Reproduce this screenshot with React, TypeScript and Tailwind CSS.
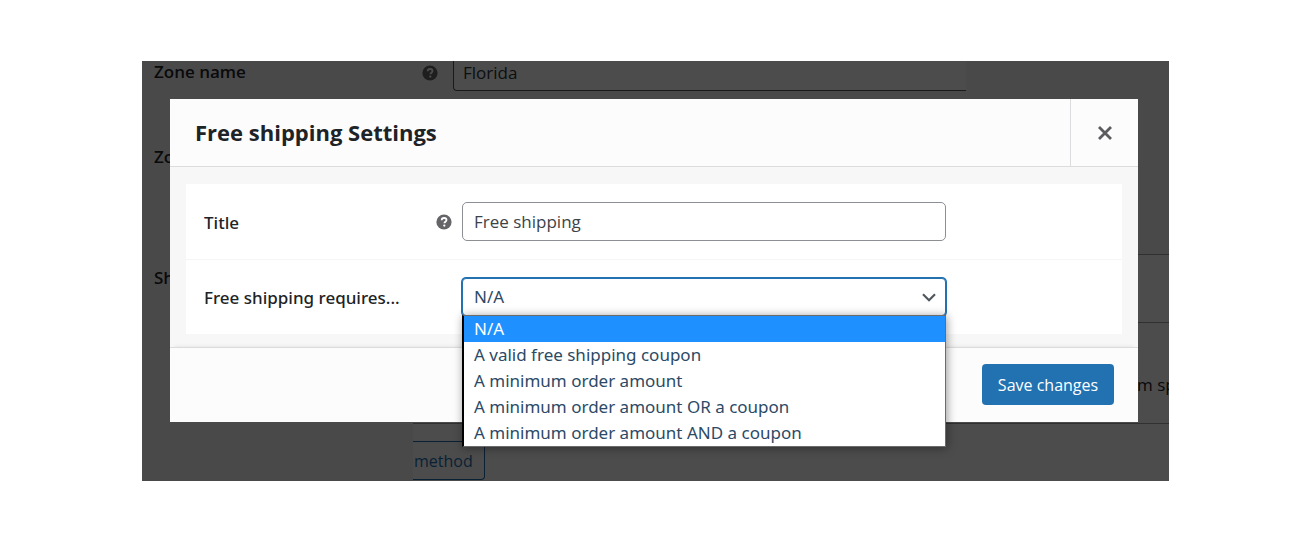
import { useState } from "react";

const REQUIREMENTS = [
  "N/A",
  "A valid free shipping coupon",
  "A minimum order amount",
  "A minimum order amount OR a coupon",
  "A minimum order amount AND a coupon",
];

function HelpTip() {
  return (
    <svg viewBox="0 0 16 16" className="size-4 shrink-0" aria-hidden="true">
      <circle cx="8" cy="8" r="7.6" fill="#646469" />
      <path
        d="M5.7 6.3C5.7 4.9 6.7 4 8.1 4s2.4.8 2.4 2.1c0 1.7-2.1 1.7-2.1 3.2"
        fill="none"
        stroke="#fff"
        strokeWidth="1.8"
      />
      <circle cx="8.3" cy="11.6" r="1.15" fill="#fff" />
    </svg>
  );
}

// Zone settings screen behind the modal
function ZonePage() {
  return (
    <div className="col-start-1 row-start-1 flex flex-col overflow-hidden bg-[#f5f5f7] text-[17px] text-[#1d2327]">
      <div className="flex h-[30px] items-start pl-3">
        <label htmlFor="zone-name" className="w-[268px] leading-[22px] font-semibold">
          Zone name
        </label>
        <div className="flex h-6 w-[31px] items-center">
          <HelpTip />
        </div>
        <input
          id="zone-name"
          className="h-[30px] w-[513px] rounded-bl border-b border-l border-[#50575e] bg-white px-[9px] pb-[6px] text-[#2c3338] outline-none"
          defaultValue="Florida"
        />
      </div>

      <div className="flex h-[163px] items-center pb-8 pl-3 font-semibold">Zo</div>

      <div className="flex grow">
        <div className="w-[271px] shrink-0 pt-3 pl-3 leading-6 font-semibold">Sh</div>
        <div className="flex grow flex-col border-t border-[#a0a0a0] bg-white">
          <div className="h-[67px]" />
          <div className="flex h-[101px] items-center justify-end overflow-hidden border-t border-[#a0a0a0] pt-6">
            <span className="w-8 whitespace-nowrap">m sp</span>
          </div>
          <div className="border-t border-[#a0a0a0] pt-[17px] pb-px">
            <button className="h-[39px] w-[72px] rounded-r border border-l-0 border-[#2271b1] pl-px text-left text-base text-[#2271b1]">
              method
            </button>
          </div>
        </div>
      </div>
    </div>
  );
}

export default function App() {
  const [title, setTitle] = useState("Free shipping");
  const [requires, setRequires] = useState(REQUIREMENTS[0]);
  const [open, setOpen] = useState(true);

  return (
    <main className="min-h-screen bg-white pt-[61px] pr-[131px] pl-[142px] font-['Open_Sans','Noto_Sans',sans-serif]">
      <div className="grid">
        <ZonePage />

        <div className="z-10 col-start-1 row-start-1 bg-black/70 pt-[38px] pr-[31px] pb-[59px] pl-7">
          <section role="dialog" aria-label="Free shipping Settings" className="bg-[#fcfcfc]">
            <header className="flex h-[68px] items-stretch border-b border-[#dcdcde]">
              <h1 className="flex grow items-center pl-[25px] text-[22px] font-bold text-[#1d2327]">
                Free shipping Settings
              </h1>
              <button
                aria-label="Close"
                className="flex w-[68px] items-center justify-center border-l border-[#dcdcde]"
              >
                <svg viewBox="0 0 14 14" className="size-[14px]">
                  <path d="M1 1l12 12M13 1L1 13" stroke="#5c5c60" strokeWidth="2.8" />
                </svg>
              </button>
            </header>

            <div className="bg-[#f7f7f7] px-4 pt-[17px] pb-[13px] text-[17px]">
              <div className="bg-white">
                <div className="flex h-[76px] items-center border-b border-[#f5f5f5] px-[18px]">
                  <div className="mr-[10px] flex w-[248px] shrink-0 items-center justify-between">
                    <label
                      htmlFor="method-title"
                      className="pt-[2px] font-['Noto_Sans',sans-serif] font-medium text-[#1d2327]"
                    >
                      Title
                    </label>
                    <HelpTip />
                  </div>
                  <input
                    id="method-title"
                    className="h-[39px] w-full max-w-[484px] rounded-[5px] border border-[#8c8f94] bg-white px-[11px] text-[#3c4348] outline-none"
                    value={title}
                    onChange={(e) => setTitle(e.target.value)}
                  />
                </div>

                <div className="flex h-[74px] items-center px-[18px]">
                  <label
                    htmlFor="method-requires"
                    className="mr-[10px] w-[248px] shrink-0 pt-[2px] font-['Noto_Sans',sans-serif] font-medium text-[#1d2327]"
                  >
                    Free shipping requires...
                  </label>
                  <div className="relative w-full max-w-[484px] font-['Noto_Sans',sans-serif]">
                    <select
                      id="method-requires"
                      className="block h-[38px] w-full appearance-none rounded-[4px] border border-[#2271b1] bg-white px-[11px] text-[#2c4a66] ring-1 ring-[#2271b1] outline-none"
                      value={requires}
                      onChange={(e) => setRequires(e.target.value)}
                      onClick={() => setOpen(!open)}
                    >
                      {REQUIREMENTS.map((r) => (
                        <option key={r}>{r}</option>
                      ))}
                    </select>
                    <svg
                      viewBox="0 0 14 9"
                      className="pointer-events-none absolute top-[15px] right-[10px] h-[9px] w-[14px]"
                    >
                      <path d="M1 1.2l6 6 6-6" fill="none" stroke="#50575e" strokeWidth="2.2" />
                    </svg>

                    {open && (
                      <ul
                        role="listbox"
                        className="absolute top-[37px] left-0 z-20 w-full border border-l-2 border-[#6b6b6b] border-l-black bg-white shadow-[1px_1px_9px_rgba(0,0,0,0.4)]"
                      >
                        {REQUIREMENTS.map((r) => (
                          <li
                            key={r}
                            role="option"
                            aria-selected={r === requires}
                            className={`h-[26px] cursor-default px-[10px] leading-[26px] ${
                              r === requires ? "bg-[#1e90ff] text-white" : "text-[#2c4a66]"
                            }`}
                            onClick={() => {
                              setRequires(r);
                              setOpen(false);
                            }}
                          >
                            {r}
                          </li>
                        ))}
                      </ul>
                    )}
                  </div>
                </div>
              </div>
            </div>

            <footer className="flex justify-end border-t border-[#dcdcde] pt-4 pr-6 pb-[17px] shadow-[0_-4px_4px_-4px_rgba(0,0,0,0.1)]">
              <button className="h-[41px] w-[132px] rounded-[4px] bg-[#2271b1] text-base text-white">
                Save changes
              </button>
            </footer>
          </section>
        </div>
      </div>
    </main>
  );
}
